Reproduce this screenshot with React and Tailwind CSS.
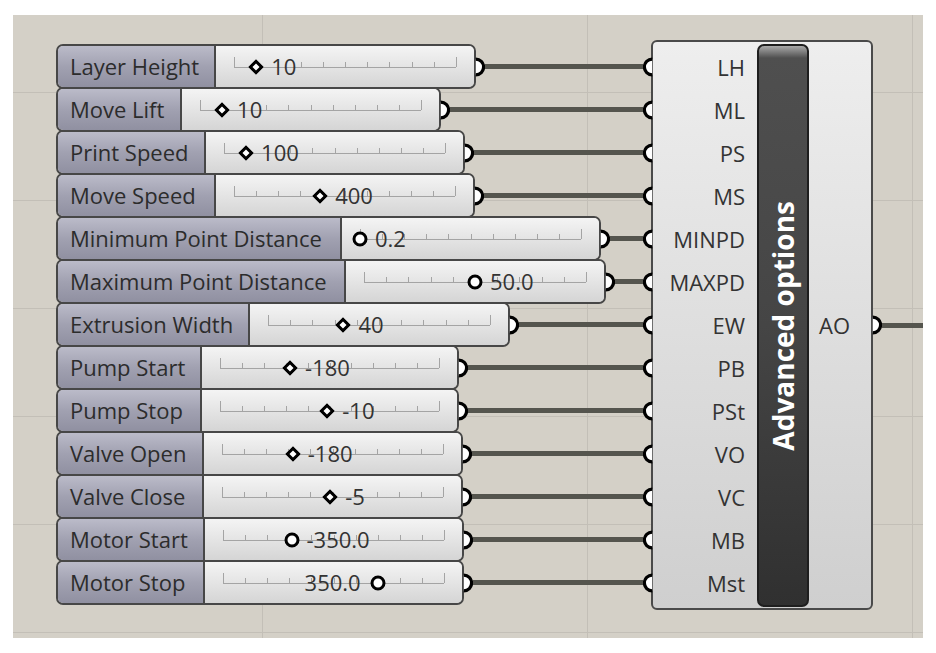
import React from 'react';

// Grasshopper canvas: number sliders wired into an "Advanced options" component
const rows = [
  { label: 'Layer Height', lw: 160, w: 420, pos: 0.1, val: '10', knob: 'd', code: 'LH' },
  { label: 'Move Lift', lw: 126, w: 385, pos: 0.1, val: '10', knob: 'd', code: 'ML' },
  { label: 'Print Speed', lw: 150, w: 409, pos: 0.1, val: '100', knob: 'd', code: 'PS' },
  { label: 'Move Speed', lw: 160, w: 419, pos: 0.39, val: '400', knob: 'd', code: 'MS' },
  { label: 'Minimum Point Distance', lw: 286, w: 545, pos: 0, val: '0.2', knob: 'c', code: 'MINPD' },
  { label: 'Maximum Point Distance', lw: 290, w: 550, pos: 0.5, val: '50.0', knob: 'c', code: 'MAXPD' },
  { label: 'Extrusion Width', lw: 194, w: 454, pos: 0.34, val: '40', knob: 'd', code: 'EW' },
  { label: 'Pump Start', lw: 146, w: 403, pos: 0.32, val: '-180', knob: 'd', code: 'PB' },
  { label: 'Pump Stop', lw: 146, w: 403, pos: 0.49, val: '-10', knob: 'd', code: 'PSt' },
  { label: 'Valve Open', lw: 148, w: 407, pos: 0.32, val: '-180', knob: 'd', code: 'VO' },
  { label: 'Valve Close', lw: 148, w: 407, pos: 0.49, val: '-5', knob: 'd', code: 'VC' },
  { label: 'Motor Start', lw: 149, w: 408, pos: 0.31, val: '-350.0', knob: 'c', code: 'MB' },
  { label: 'Motor Stop', lw: 149, w: 408, pos: 0.7, val: '350.0', knob: 'c', code: 'Mst', textLeft: true },
];

const ticks = [0, 1, 2, 3, 4, 5, 6, 7, 8, 9, 10];

function Grip({ dir = 'out' }) {
  return (
    <svg width="11" height="20" viewBox="0 0 11 20" className={`relative z-10 shrink-0 ${dir === 'out' ? '-ml-[2px]' : '-mr-[3px]'}`}>
      {dir === 'out' ? (
        <path d="M1.8 2.2 A7.8 7.8 0 0 1 1.8 17.8" fill="#fff" stroke="#000" strokeWidth="3.2" />
      ) : (
        <path d="M9.2 2.2 A7.8 7.8 0 0 0 9.2 17.8" fill="#fff" stroke="#000" strokeWidth="3.2" />
      )}
    </svg>
  );
}

function Track({ r }) {
  return (
    <div className="relative h-full">
      <div className="absolute left-0 right-0 top-1/2 h-px bg-[#a4a4a4]" />
      {ticks.map((i) => (
        <div
          key={i}
          className={`absolute bottom-1/2 w-px bg-[#a4a4a4] ${i === 0 || i === 10 ? 'h-[10px]' : 'h-[5px]'}`}
          style={{ left: `${i * 10}%` }}
        />
      ))}
      {r.knob === 'd' ? (
        <div
          className="absolute top-1/2 w-[11px] h-[11px] -translate-x-1/2 -translate-y-1/2 rotate-45 border-[3px] border-black bg-white"
          style={{ left: `${r.pos * 100}%` }}
        />
      ) : (
        <div
          className="absolute top-1/2 w-[15px] h-[15px] -translate-x-1/2 -translate-y-1/2 rounded-full border-[3.5px] border-black bg-white"
          style={{ left: `${r.pos * 100}%` }}
        />
      )}
      <span
        className="absolute top-1/2 -translate-y-1/2 -mt-[1px] leading-none text-[22px] text-[#333] whitespace-nowrap"
        style={r.textLeft ? { right: `calc(${(1 - r.pos) * 100}% + 17px)` } : { left: `calc(${r.pos * 100}% + 15px)` }}
      >
        {r.val}
      </span>
    </div>
  );
}

function SliderRow({ r, first }) {
  return (
    <div className={`flex items-center h-[45px] ${first ? 'mt-0' : '-mt-[2px]'}`}>
      <div className="flex h-full shrink-0 rounded-[7px] border-2 border-[#474747] overflow-hidden" style={{ width: r.w }}>
        <div
          className="h-full shrink-0 flex items-center pl-[12px] border-r-2 border-[#474747] bg-linear-to-b from-[#bbbbc9] via-[#a1a1b1] to-[#9090a1] text-[22px] text-[#2c2c2c] whitespace-nowrap"
          style={{ width: r.lw - 2 }}
        >
          {r.label}
        </div>
        <div className="flex-1 h-full px-[18px] bg-linear-to-b from-[#f4f4f4] to-[#d5d5d5]">
          <Track r={r} />
        </div>
      </div>
      <Grip dir="out" />
      <div className="flex-1 h-[5px] bg-[#55554e]" />
      <Grip dir="in" />
    </div>
  );
}

export default function App() {
  return (
    <div className="min-h-screen bg-white pt-[15px] pl-[13px] font-['Open_Sans','Noto_Sans',sans-serif]">
      <div className="w-[910px] h-[623px] flex items-start pl-[43px] pt-[25px] bg-[#d4d0c7] bg-[linear-gradient(to_right,#c3bfb7_1px,transparent_1px),linear-gradient(to_bottom,#c3bfb7_1px,transparent_1px)] bg-[size:325px_108px] bg-[position:249px_77px]">
        {/* sliders + wires */}
        <div className="w-[595px] shrink-0 pt-[4px]">
          {rows.map((r, i) => (
            <SliderRow key={r.code} r={r} first={i === 0} />
          ))}
        </div>

        {/* component */}
        <div className="w-[222px] h-[570px] shrink-0 flex rounded-[6px] border-2 border-[#4a4a4a] bg-linear-to-b from-[#eeeeee] to-[#cfcfcf]">
          <div className="w-[104px] shrink-0 pt-[3px] pr-[12px] flex flex-col">
            {rows.map((r) => (
              <div key={r.code} className="h-[43px] flex items-center justify-end text-[22px] text-[#333] leading-none">
                {r.code}
              </div>
            ))}
          </div>
          <div className="w-[52px] shrink-0 mt-[2px] mb-[1px] rounded-[7px] border-2 border-[#1e1e1e] bg-[linear-gradient(to_bottom,#a9a9a9_0px,#4f4f4f_12px,#454545_50%,#303030_100%)] flex items-center justify-center">
            <span className="[writing-mode:vertical-rl] rotate-180 text-white font-bold text-[28px] leading-none whitespace-nowrap">
              Advanced options
            </span>
          </div>
          <div className="flex-1 flex items-center pl-[10px] text-[22px] text-[#333]">AO</div>
        </div>

        {/* output wire */}
        <div className="flex-1 h-[570px] flex items-center">
          <Grip dir="out" />
          <div className="flex-1 h-[5px] bg-[#55554e]" />
        </div>
      </div>
    </div>
  );
}
